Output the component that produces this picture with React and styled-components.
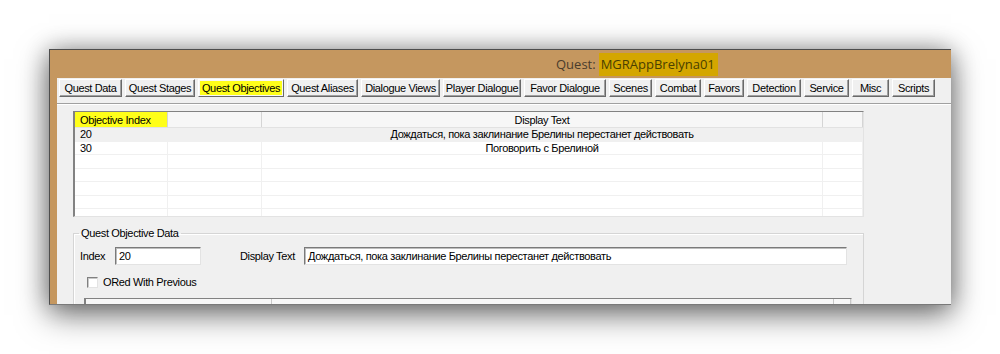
import React from 'react';
import styled, { createGlobalStyle } from 'styled-components';

const GlobalStyle = createGlobalStyle`
body {
  margin: 0;
  background: #fff;
  font-family: "Liberation Sans", Arial, sans-serif;
}
`

const Page = styled.div`
height: 354px;
padding: 49px 0 0 49px;
box-sizing: border-box;
overflow: hidden;
`
const Window = styled.div`
width: 902px;
height: 256px;
box-sizing: border-box;
display: flex;
flex-direction: column;
background: #c5975f;
border: 1px solid #4d4d4d;
border-right: none;
border-bottom-color: #7a7a7a;
box-shadow: 0 10px 30px rgba(0, 0, 0, 0.5), 0 0 22px rgba(0, 0, 0, 0.3);
overflow: hidden;
`
const TitleBar = styled.div`
height: 28px;
flex: none;
display: flex;
align-items: center;
padding-left: 506px;
font-family: "Open Sans", "Noto Sans", sans-serif;
font-size: 13px;
color: #4a3c2c;
`
const Marked = styled.span`
background: #d4a600;
color: #4a4000;
padding: 2px 3px 3px 2px;
margin-left: 3px;
`
const Body = styled.div`
flex: 1;
display: flex;
padding-left: 7px;
min-height: 0;
`
const Content = styled.div`
flex: 1;
display: flex;
flex-direction: column;
background: #f0f0f0;
font-size: 11px;
letter-spacing: -0.35px;
color: #000;
`
const TabStrip = styled.div`
height: 25px;
flex: none;
display: flex;
gap: 3px;
padding: 1px 0 0 2px;
box-sizing: border-box;
`
const Tab = styled.div`
height: 18px;
box-sizing: border-box;
display: flex;
align-items: center;
justify-content: center;
white-space: nowrap;
border: 1px solid;
border-color: #fff #696969 #696969 #fff;
box-shadow: inset -1px -1px #a0a0a0;
background: ${p => (p.$active ? '#ffff1a' : '#f0f0f0')};
outline: ${p => (p.$active ? '1px solid #f6f6f6' : 'none')};
outline-offset: -2px;
`
const Panel = styled.div`
flex: 1;
border-top: 1px solid #a0a0a0;
box-shadow: inset 0 1px #fff;
padding: 7px 0 0 16px;
`
const ListView = styled.div`
width: 791px;
height: 106px;
box-sizing: border-box;
background: #fff;
border: 1px solid;
border-color: #828282 #e3e3e3 #e3e3e3 #828282;
border-left-width: 2px;
overflow: hidden;
`
const Row = styled.div`
display: grid;
grid-template-columns: 93px 94px 561px 1fr;
height: ${p => (p.$head ? '16px' : '13.5px')};
background: ${p => (p.$head ? '#f7f7f7' : p.$shade ? '#f0f0f0' : '#fff')};
border-bottom: 1px solid ${p => (p.$head ? '#e2e2e2' : '#f0f0f0')};
box-sizing: border-box;
`
const Cell = styled.div`
display: flex;
align-items: center;
justify-content: ${p => (p.$center ? 'center' : 'flex-start')};
padding-left: ${p => (p.$center ? '0' : '5px')};
border-right: 1px solid ${p => (p.$head ? '#d5d5d5' : '#f0f0f0')};
background: ${p => (p.$mark ? '#ffff1a' : 'transparent')};
white-space: nowrap;
overflow: hidden;
`
const Group = styled.fieldset`
width: 791px;
box-sizing: border-box;
margin: 10px 0 0 0;
padding: 0 6px 0 6px;
border: 1px solid #d5d5d5;
box-shadow: inset 1px 1px #fff;
min-width: 0;
`
const Legend = styled.legend`
padding: 0 2px;
margin-left: -1px;
`
const FieldRow = styled.div`
display: flex;
align-items: center;
margin-top: 8px;
`
const Label = styled.span`
width: ${p => p.$w}px;
margin-left: ${p => p.$gap || 0}px;
flex: none;
`
const TextBox = styled.div`
width: ${p => p.$w}px;
height: 18px;
box-sizing: border-box;
display: flex;
align-items: center;
padding-left: 3px;
background: #fff;
border: 1px solid;
border-color: #7a7a7a #e3e3e3 #e3e3e3 #7a7a7a;
box-shadow: inset 1px 1px #bdbdbd;
white-space: nowrap;
overflow: hidden;
`
const CheckRow = styled.div`
display: flex;
align-items: center;
gap: 5px;
margin: 11px 0 0 7px;
`
const Box = styled.span`
width: 11px;
height: 11px;
box-sizing: border-box;
background: #fff;
border: 1px solid;
border-color: #808080 #e3e3e3 #e3e3e3 #808080;
box-shadow: inset 1px 1px #c8c8c8;
`
const SubList = styled.div`
width: 768px;
height: 30px;
margin: 10px 0 0 4px;
box-sizing: border-box;
border: 1px solid;
border-color: #828282 #e3e3e3 #e3e3e3 #828282;
border-left-width: 2px;
background: #f7f7f7;
display: grid;
grid-template-columns: 186px 562px 1fr;
`
const SubCell = styled.div`
border-right: 1px solid #c8c8c8;
`

const tabs = [
  ['Quest Data', 63],
  ['Quest Stages', 70],
  ['Quest Objectives', 86],
  ['Quest Aliases', 71],
  ['Dialogue Views', 79],
  ['Player Dialogue', 78],
  ['Favor Dialogue', 82],
  ['Scenes', 43],
  ['Combat', 46],
  ['Favors', 40],
  ['Detection', 54],
  ['Service', 45],
  ['Misc', 37],
  ['Scripts', 43],
];

const objectives = [
  ['20', 'Дождаться, пока заклинание Брелины перестанет действовать'],
  ['30', 'Поговорить с Брелиной'],
  ['', ''],
  ['', ''],
  ['', ''],
  ['', ''],
  ['', ''],
];

export default function App() {
  return (
    <Page>
      <GlobalStyle />
      <Window>
        <TitleBar>
          Quest:<Marked>MGRAppBrelyna01</Marked>
        </TitleBar>
        <Body>
          <Content>
            <TabStrip>
              {tabs.map(([name, w]) => (
                <Tab key={name} $active={name === 'Quest Objectives'} style={{ width: w }}>
                  {name}
                </Tab>
              ))}
            </TabStrip>
            <Panel>
              <ListView>
                <Row $head>
                  <Cell $head $mark>Objective Index</Cell>
                  <Cell $head></Cell>
                  <Cell $head $center>Display Text</Cell>
                  <Cell $head></Cell>
                </Row>
                {objectives.map(([idx, text], i) => (
                  <Row key={i} $shade={i === 0}>
                    <Cell>{idx}</Cell>
                    <Cell></Cell>
                    <Cell $center>{text}</Cell>
                    <Cell></Cell>
                  </Row>
                ))}
              </ListView>
              <Group>
                <Legend>Quest Objective Data</Legend>
                <FieldRow>
                  <Label $w={35}>Index</Label>
                  <TextBox $w={86}>20</TextBox>
                  <Label $w={64} $gap={39}>Display Text</Label>
                  <TextBox $w={543}>Дождаться, пока заклинание Брелины перестанет действовать</TextBox>
                </FieldRow>
                <CheckRow>
                  <Box />
                  <span>ORed With Previous</span>
                </CheckRow>
                <SubList>
                  <SubCell />
                  <SubCell />
                  <SubCell />
                </SubList>
              </Group>
            </Panel>
          </Content>
        </Body>
      </Window>
    </Page>
  );
}
